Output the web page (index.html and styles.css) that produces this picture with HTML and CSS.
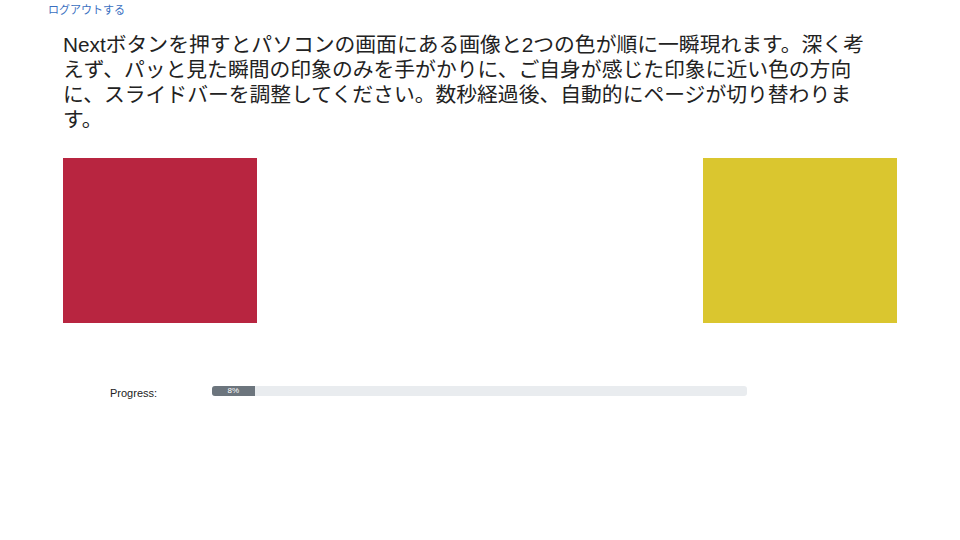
FILE: index.html
```html
<!DOCTYPE html>
<html lang="ja">
<head>
<meta charset="utf-8">
<link rel="stylesheet" href="styles.css">
</head>
<body>
<header class="top">
  <a class="logout" href="#">ログアウトする</a>
</header>
<main class="main">
  <p class="intro">Nextボタンを押すとパソコンの画面にある画像と2つの色が順に一瞬現れます。深く考えず、パッと見た瞬間の印象のみを手がかりに、ご自身が感じた印象に近い色の方向に、スライドバーを調整してください。数秒経過後、自動的にページが切り替わります。</p>
  <div class="swatches">
    <div class="swatch red"></div>
    <div class="swatch yellow"></div>
  </div>
  <div class="progress-row">
    <span class="progress-label">Progress:</span>
    <div class="progress">
      <div class="progress-bar" style="width: 8%">8%</div>
    </div>
  </div>
</main>
</body>
</html>
```
FILE: styles.css
```css
html, body {
  margin: 0;
  padding: 0;
  background: #ffffff;
  font-family: "Noto Sans CJK JP", "Noto Sans", sans-serif;
  color: #212529;
}
.top {
  padding: 0 0 0 48px;
  height: 14px;
  line-height: 14px;
}
.logout {
  font-family: "Noto Sans CJK JP", sans-serif;
  font-size: 11px;
  color: #3a6fbf;
  text-decoration: none;
}
.main {
  padding-left: 63px;
  width: 834px;
}
.intro {
  margin: 18px 0 0 0;
  width: 820px;
  font-family: "Liberation Sans", "Noto Sans CJK JP", sans-serif;
  font-size: 20.8px;
  line-height: 25px;
  color: #222;
}
.swatches {
  display: flex;
  justify-content: space-between;
  margin-top: 26px;
}
.swatch {
  width: 194px;
  height: 165px;
}
.red { background: #b82540; }
.yellow { background: #dac62f; }
.progress-row {
  display: flex;
  align-items: flex-start;
  margin-top: 63px;
}
.progress-label {
  font-family: "Liberation Sans", sans-serif;
  font-size: 11px;
  line-height: 14px;
  color: #222;
  padding-left: 47px;
  width: 102px;
  margin-top: 0;
}
.progress {
  width: 535px;
  height: 10px;
  background: #e9ecef;
  border-radius: 3px;
  overflow: hidden;
  display: flex;
}
.progress-bar {
  background: #6c757d;
  color: #fff;
  font-family: "Liberation Sans", sans-serif;
  font-size: 8px;
  line-height: 10px;
  text-align: center;
}
```
